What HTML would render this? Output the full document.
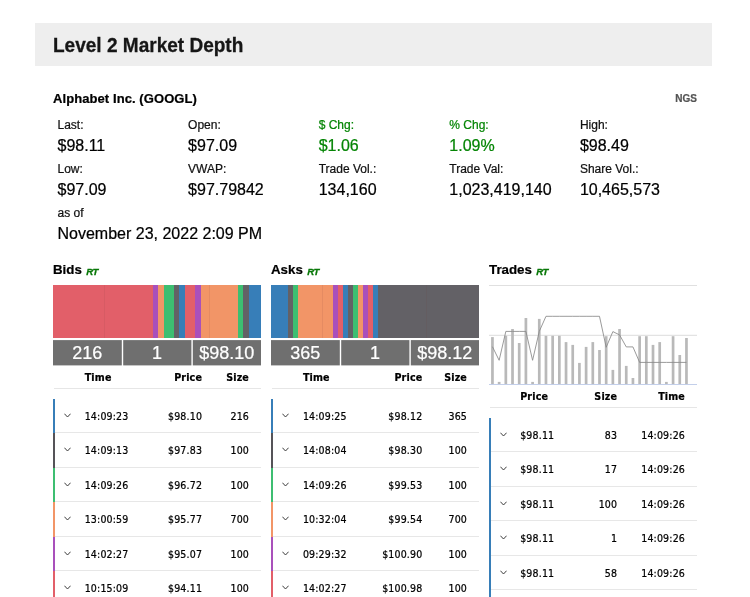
<!DOCTYPE html>
<html lang="en">
<head>
<meta charset="utf-8">
<title>Level 2 Market Depth</title>
<style>
html,body{margin:0;padding:0;background:#fff;}
body{will-change:transform;-webkit-text-stroke:.22px;width:750px;height:597px;overflow:hidden;position:relative;font-family:"Liberation Sans",Arial,sans-serif;color:#000;}
.hdr{position:absolute;left:35px;top:23px;width:677px;height:43px;background:#eeeeee;}
.hdr h1{margin:0;position:absolute;left:17.8px;top:10px;font:bold 21px/24px "Liberation Sans",Arial,sans-serif;color:#161616;-webkit-text-stroke:.3px;white-space:nowrap;transform:scaleX(.906);transform-origin:0 50%;}
.co{position:absolute;left:53px;top:90.6px;font:bold 13px/16px "Liberation Sans",Arial,sans-serif;color:#000;letter-spacing:.08px;white-space:nowrap;}
.exch{position:absolute;right:53px;top:93px;font:bold 10px/12px "Liberation Sans",Arial,sans-serif;color:#555;}
.q{position:absolute;left:53px;top:114px;border-collapse:collapse;table-layout:fixed;width:653px;}
.q td{padding:0 0 0 4.5px;vertical-align:top;height:44px;white-space:nowrap;}
.q .l{display:block;font:12px/22px "Liberation Sans",Arial,sans-serif;height:22px;color:#111;}
.q .v{display:block;position:relative;top:-1px;font:16px/22px "Liberation Sans",Arial,sans-serif;height:22px;color:#000;}
.q .up .l,.q .up .v{color:#058505;}
.panel{position:absolute;top:260px;width:208px;}
.panel h2{margin:0;font:bold 13.3px/20px "Liberation Sans",Arial,sans-serif;color:#000;height:25px;white-space:nowrap;}
.panel h2 em{font:italic bold 9.6px/20px "Liberation Sans",Arial,sans-serif;color:#087808;-webkit-text-stroke:.3px;letter-spacing:-.5px;margin-left:.7px;position:relative;top:1px;}
.map{position:relative;height:53px;width:208px;overflow:hidden;}
.map i{position:absolute;top:0;height:53px;display:block;}
.map i.dv{background:rgba(120,60,60,.10);z-index:2;}
.s-r{background:#e25f69;} .s-p{background:#a950bb;} .s-o{background:#f29567;}
.s-g{background:#3dbe71;} .s-k{background:#636166;} .s-b{background:#377eb8;}
.top{display:flex;margin-top:2px;height:25.5px;gap:1.4px;position:relative;}
.top svg{position:absolute;left:0;top:0;}
.top span{flex:1 1 0;position:relative;color:#fff;font:18px/27.5px "Liberation Sans",Arial,sans-serif;text-align:center;height:25.5px;overflow:hidden;}
table.bk{border-collapse:collapse;width:208px;table-layout:fixed;font:10.5px/13px "DejaVu Sans Condensed","DejaVu Sans",sans-serif;color:#000;letter-spacing:.17px;}
table.bk th{font:bold 10.6px/13px "DejaVu Sans Condensed","DejaVu Sans",sans-serif;height:22px;padding:0;vertical-align:top;}
table.bk thead tr{border-bottom:1.3px solid #e6e6e6;}
table.bk th div{padding-top:5px;}
table.bk tbody:before{content:"";display:block;height:10px;}
table.bk td{height:31.5px;padding:2px 0 0;border-bottom:1px solid #e7e7e7;vertical-align:middle;}
table.bk td.ex{border-left:2px solid #377eb8;}
.chev{display:block;margin:0 0 0 9.2px;position:relative;top:-1.2px;}
tr.c-b td.ex{border-left-color:#377eb8;} tr.c-k td.ex{border-left-color:#555358;}
tr.c-g td.ex{border-left-color:#3dbe71;} tr.c-o td.ex{border-left-color:#f29567;}
tr.c-p td.ex{border-left-color:#a950bb;} tr.c-r td.ex{border-left-color:#e25f69;}
.bk .tm,.bk .tp{text-align:left;} .bk .pr,.bk .ts{text-align:right;}
table.bk .sz,table.bk .tt{text-align:right;padding-right:12px;}
.chart{display:block;margin-bottom:-1.5px;}
</style>
</head>
<body>
<div class="hdr"><h1>Level 2 Market Depth</h1></div>
<div class="co">Alphabet Inc. (GOOGL)</div>
<div class="exch">NGS</div>
<table class="q">
<tr>
<td><span class="l">Last:</span><span class="v">$98.11</span></td>
<td><span class="l">Open:</span><span class="v">$97.09</span></td>
<td class="up"><span class="l">$ Chg:</span><span class="v">$1.06</span></td>
<td class="up"><span class="l">% Chg:</span><span class="v">1.09%</span></td>
<td><span class="l">High:</span><span class="v">$98.49</span></td>
</tr>
<tr>
<td><span class="l">Low:</span><span class="v">$97.09</span></td>
<td><span class="l">VWAP:</span><span class="v">$97.79842</span></td>
<td><span class="l">Trade Vol.:</span><span class="v">134,160</span></td>
<td><span class="l">Trade Val:</span><span class="v">1,023,419,140</span></td>
<td><span class="l">Share Vol.:</span><span class="v">10,465,573</span></td>
</tr>
<tr>
<td colspan="5"><span class="l">as of</span><span class="v">November 23, 2022 2:09 PM</span></td>
</tr>
</table>

<div class="panel" style="left:53px">
<h2>Bids <em>RT</em></h2>
<div class="map"><i class="s-r" style="left:0.0px;width:51.5px"></i><i class="s-r" style="left:51.5px;width:48.5px"></i><i class="dv" style="left:51.0px;width:1px"></i><i class="s-p" style="left:100.0px;width:5.0px"></i><i class="s-o" style="left:105.0px;width:5.9px"></i><i class="s-g" style="left:110.9px;width:10.2px"></i><i class="s-k" style="left:121.1px;width:4.8px"></i><i class="s-b" style="left:125.9px;width:6.1px"></i><i class="s-r" style="left:132.0px;width:9.9px"></i><i class="s-p" style="left:141.9px;width:6.1px"></i><i class="s-o" style="left:148.0px;width:8.0px"></i><i class="s-o" style="left:156.0px;width:29.0px"></i><i class="dv" style="left:155.5px;width:1px"></i><i class="s-g" style="left:185.0px;width:4.9px"></i><i class="s-k" style="left:189.9px;width:6.1px"></i><i class="s-b" style="left:196.0px;width:12.0px"></i></div>
<div class="top"><svg width="208" height="26" viewBox="0 0 208 26"><g fill="#6f6f6f"><rect x="0" y="0.1" width="68.8" height="25.3"/><rect x="70.2" y="0.1" width="68.2" height="25.3"/><rect x="139.8" y="0.1" width="68.2" height="25.3"/></g></svg><span>216</span><span>1</span><span>$98.10</span></div>
<table class="bk">
<colgroup><col style="width:30.7px"><col style="width:58px"><col style="width:59.4px"><col></colgroup>
<thead><tr><th class="ex"></th><th class="tm"><div>Time</div></th><th class="pr"><div>Price</div></th><th class="sz"><div>Size</div></th></tr></thead>
<tbody>
<tr class="c-b"><td class="ex"><svg class="chev" viewBox="0 0 7 5" width="7" height="5"><polyline points="0.4,0.7 3.5,4 6.6,0.7" fill="none" stroke="#333" stroke-width="0.95"/></svg></td><td class="tm">14:09:23</td><td class="pr">$98.10</td><td class="sz">216</td></tr>
<tr class="c-k"><td class="ex"><svg class="chev" viewBox="0 0 7 5" width="7" height="5"><polyline points="0.4,0.7 3.5,4 6.6,0.7" fill="none" stroke="#333" stroke-width="0.95"/></svg></td><td class="tm">14:09:13</td><td class="pr">$97.83</td><td class="sz">100</td></tr>
<tr class="c-g"><td class="ex"><svg class="chev" viewBox="0 0 7 5" width="7" height="5"><polyline points="0.4,0.7 3.5,4 6.6,0.7" fill="none" stroke="#333" stroke-width="0.95"/></svg></td><td class="tm">14:09:26</td><td class="pr">$96.72</td><td class="sz">100</td></tr>
<tr class="c-o"><td class="ex"><svg class="chev" viewBox="0 0 7 5" width="7" height="5"><polyline points="0.4,0.7 3.5,4 6.6,0.7" fill="none" stroke="#333" stroke-width="0.95"/></svg></td><td class="tm">13:00:59</td><td class="pr">$95.77</td><td class="sz">700</td></tr>
<tr class="c-p"><td class="ex"><svg class="chev" viewBox="0 0 7 5" width="7" height="5"><polyline points="0.4,0.7 3.5,4 6.6,0.7" fill="none" stroke="#333" stroke-width="0.95"/></svg></td><td class="tm">14:02:27</td><td class="pr">$95.07</td><td class="sz">100</td></tr>
<tr class="c-r"><td class="ex"><svg class="chev" viewBox="0 0 7 5" width="7" height="5"><polyline points="0.4,0.7 3.5,4 6.6,0.7" fill="none" stroke="#333" stroke-width="0.95"/></svg></td><td class="tm">10:15:09</td><td class="pr">$94.11</td><td class="sz">100</td></tr>
</tbody>
</table>
</div>

<div class="panel" style="left:271px">
<h2>Asks <em>RT</em></h2>
<div class="map"><i class="s-b" style="left:0.0px;width:17.0px"></i><i class="s-k" style="left:17.0px;width:5.0px"></i><i class="s-g" style="left:22.0px;width:5.0px"></i><i class="s-o" style="left:27.0px;width:24.6px"></i><i class="s-o" style="left:51.6px;width:10.4px"></i><i class="dv" style="left:51.1px;width:1px"></i><i class="s-p" style="left:62.0px;width:5.0px"></i><i class="s-r" style="left:67.0px;width:4.9px"></i><i class="s-b" style="left:71.9px;width:5.1px"></i><i class="s-k" style="left:77.0px;width:5.0px"></i><i class="s-g" style="left:82.0px;width:5.0px"></i><i class="s-o" style="left:87.0px;width:4.9px"></i><i class="s-p" style="left:91.9px;width:5.0px"></i><i class="s-r" style="left:96.9px;width:5.1px"></i><i class="s-b" style="left:102.0px;width:5.0px"></i><i class="s-k" style="left:107.0px;width:48.5px"></i><i class="s-k" style="left:155.5px;width:52.5px"></i><i class="dv" style="left:155.0px;width:1px"></i></div>
<div class="top"><svg width="208" height="26" viewBox="0 0 208 26"><g fill="#6f6f6f"><rect x="0" y="0.1" width="68.8" height="25.3"/><rect x="70.2" y="0.1" width="68.2" height="25.3"/><rect x="139.8" y="0.1" width="68.2" height="25.3"/></g></svg><span>365</span><span>1</span><span>$98.12</span></div>
<table class="bk">
<colgroup><col style="width:30.9px"><col style="width:58px"><col style="width:61.5px"><col></colgroup>
<thead><tr><th class="ex"></th><th class="tm"><div>Time</div></th><th class="pr"><div>Price</div></th><th class="sz"><div>Size</div></th></tr></thead>
<tbody>
<tr class="c-b"><td class="ex"><svg class="chev" viewBox="0 0 7 5" width="7" height="5"><polyline points="0.4,0.7 3.5,4 6.6,0.7" fill="none" stroke="#333" stroke-width="0.95"/></svg></td><td class="tm">14:09:25</td><td class="pr">$98.12</td><td class="sz">365</td></tr>
<tr class="c-k"><td class="ex"><svg class="chev" viewBox="0 0 7 5" width="7" height="5"><polyline points="0.4,0.7 3.5,4 6.6,0.7" fill="none" stroke="#333" stroke-width="0.95"/></svg></td><td class="tm">14:08:04</td><td class="pr">$98.30</td><td class="sz">100</td></tr>
<tr class="c-g"><td class="ex"><svg class="chev" viewBox="0 0 7 5" width="7" height="5"><polyline points="0.4,0.7 3.5,4 6.6,0.7" fill="none" stroke="#333" stroke-width="0.95"/></svg></td><td class="tm">14:09:26</td><td class="pr">$99.53</td><td class="sz">100</td></tr>
<tr class="c-o"><td class="ex"><svg class="chev" viewBox="0 0 7 5" width="7" height="5"><polyline points="0.4,0.7 3.5,4 6.6,0.7" fill="none" stroke="#333" stroke-width="0.95"/></svg></td><td class="tm">10:32:04</td><td class="pr">$99.54</td><td class="sz">700</td></tr>
<tr class="c-p"><td class="ex"><svg class="chev" viewBox="0 0 7 5" width="7" height="5"><polyline points="0.4,0.7 3.5,4 6.6,0.7" fill="none" stroke="#333" stroke-width="0.95"/></svg></td><td class="tm">09:29:32</td><td class="pr">$100.90</td><td class="sz">100</td></tr>
<tr class="c-r"><td class="ex"><svg class="chev" viewBox="0 0 7 5" width="7" height="5"><polyline points="0.4,0.7 3.5,4 6.6,0.7" fill="none" stroke="#333" stroke-width="0.95"/></svg></td><td class="tm">14:02:27</td><td class="pr">$100.98</td><td class="sz">100</td></tr>
</tbody>
</table>
</div>

<div class="panel" style="left:489px">
<h2>Trades <em>RT</em></h2>
<svg class="chart" width="208" height="101" viewBox="0 0 208 101">
<line x1="0" y1="0.5" x2="208" y2="0.5" stroke="#e0e0e0" stroke-width="1"/>
<line x1="0" y1="50.3" x2="208" y2="50.3" stroke="#dddddd" stroke-width="1"/>
<g fill="#b9b9b9"><rect x="2.10" y="52.1" width="2.7" height="46.9"/><rect x="8.79" y="96.9" width="2.7" height="2.1"/><rect x="15.48" y="50.8" width="2.7" height="48.2"/><rect x="22.17" y="44.0" width="2.7" height="55.0"/><rect x="28.86" y="58.0" width="2.7" height="41.0"/><rect x="35.55" y="33.0" width="2.7" height="66.0"/><rect x="42.24" y="96.9" width="2.7" height="2.1"/><rect x="48.93" y="33.9" width="2.7" height="65.1"/><rect x="55.62" y="50.8" width="2.7" height="48.2"/><rect x="62.31" y="50.8" width="2.7" height="48.2"/><rect x="69.00" y="50.8" width="2.7" height="48.2"/><rect x="75.69" y="57.1" width="2.7" height="41.9"/><rect x="82.38" y="59.9" width="2.7" height="39.1"/><rect x="89.07" y="77.9" width="2.7" height="21.1"/><rect x="95.76" y="61.9" width="2.7" height="37.1"/><rect x="102.45" y="57.1" width="2.7" height="41.9"/><rect x="109.14" y="65.0" width="2.7" height="34.0"/><rect x="115.83" y="51.2" width="2.7" height="47.8"/><rect x="122.52" y="84.9" width="2.7" height="14.1"/><rect x="129.21" y="44.0" width="2.7" height="55.0"/><rect x="135.90" y="80.9" width="2.7" height="18.1"/><rect x="142.59" y="93.0" width="2.7" height="6.0"/><rect x="149.28" y="51.2" width="2.7" height="47.8"/><rect x="155.97" y="51.2" width="2.7" height="47.8"/><rect x="162.66" y="59.9" width="2.7" height="39.1"/><rect x="169.35" y="57.1" width="2.7" height="41.9"/><rect x="176.04" y="96.9" width="2.7" height="2.1"/><rect x="182.73" y="51.2" width="2.7" height="47.8"/><rect x="189.42" y="70.0" width="2.7" height="29.0"/><rect x="196.11" y="53.0" width="2.7" height="46.0"/></g>
<line x1="0" y1="99.5" x2="208" y2="99.5" stroke="#c3cfea" stroke-width="1.2"/>
<polyline points="3.45,61.7 10.14,75.3 16.83,46.4 23.52,46.4 30.21,46.4 36.90,46.4 43.59,75.3 50.28,46.4 56.97,31.3 63.66,31.3 70.35,31.3 77.04,31.3 83.73,31.3 90.42,31.3 97.11,31.3 103.80,31.3 110.49,31.3 117.18,62.3 123.87,46.6 130.56,49.9 137.25,61.9 143.94,61.9 150.63,77.4 157.32,77.4 164.01,77.4 170.70,77.4 177.39,77.4 184.08,77.4 190.77,77.4 197.46,77.4" fill="none" stroke="#888" stroke-width="0.85" stroke-linejoin="round"/>
</svg>
<table class="bk">
<colgroup><col style="width:30.2px"><col style="width:60px"><col style="width:37px"><col></colgroup>
<thead><tr><th class="ex"></th><th class="tp"><div>Price</div></th><th class="ts"><div>Size</div></th><th class="tt"><div>Time</div></th></tr></thead>
<tbody>
<tr class="c-b"><td class="ex"><svg class="chev" viewBox="0 0 7 5" width="7" height="5"><polyline points="0.4,0.7 3.5,4 6.6,0.7" fill="none" stroke="#333" stroke-width="0.95"/></svg></td><td class="tp">$98.11</td><td class="ts">83</td><td class="tt">14:09:26</td></tr>
<tr class="c-b"><td class="ex"><svg class="chev" viewBox="0 0 7 5" width="7" height="5"><polyline points="0.4,0.7 3.5,4 6.6,0.7" fill="none" stroke="#333" stroke-width="0.95"/></svg></td><td class="tp">$98.11</td><td class="ts">17</td><td class="tt">14:09:26</td></tr>
<tr class="c-b"><td class="ex"><svg class="chev" viewBox="0 0 7 5" width="7" height="5"><polyline points="0.4,0.7 3.5,4 6.6,0.7" fill="none" stroke="#333" stroke-width="0.95"/></svg></td><td class="tp">$98.11</td><td class="ts">100</td><td class="tt">14:09:26</td></tr>
<tr class="c-b"><td class="ex"><svg class="chev" viewBox="0 0 7 5" width="7" height="5"><polyline points="0.4,0.7 3.5,4 6.6,0.7" fill="none" stroke="#333" stroke-width="0.95"/></svg></td><td class="tp">$98.11</td><td class="ts">1</td><td class="tt">14:09:26</td></tr>
<tr class="c-b"><td class="ex"><svg class="chev" viewBox="0 0 7 5" width="7" height="5"><polyline points="0.4,0.7 3.5,4 6.6,0.7" fill="none" stroke="#333" stroke-width="0.95"/></svg></td><td class="tp">$98.11</td><td class="ts">58</td><td class="tt">14:09:26</td></tr>
<tr class="c-b"><td class="ex"><svg class="chev" viewBox="0 0 7 5" width="7" height="5"><polyline points="0.4,0.7 3.5,4 6.6,0.7" fill="none" stroke="#333" stroke-width="0.95"/></svg></td><td class="tp">$98.11</td><td class="ts">100</td><td class="tt">14:09:26</td></tr>
</tbody>
</table>
</div>
</body>
</html>
